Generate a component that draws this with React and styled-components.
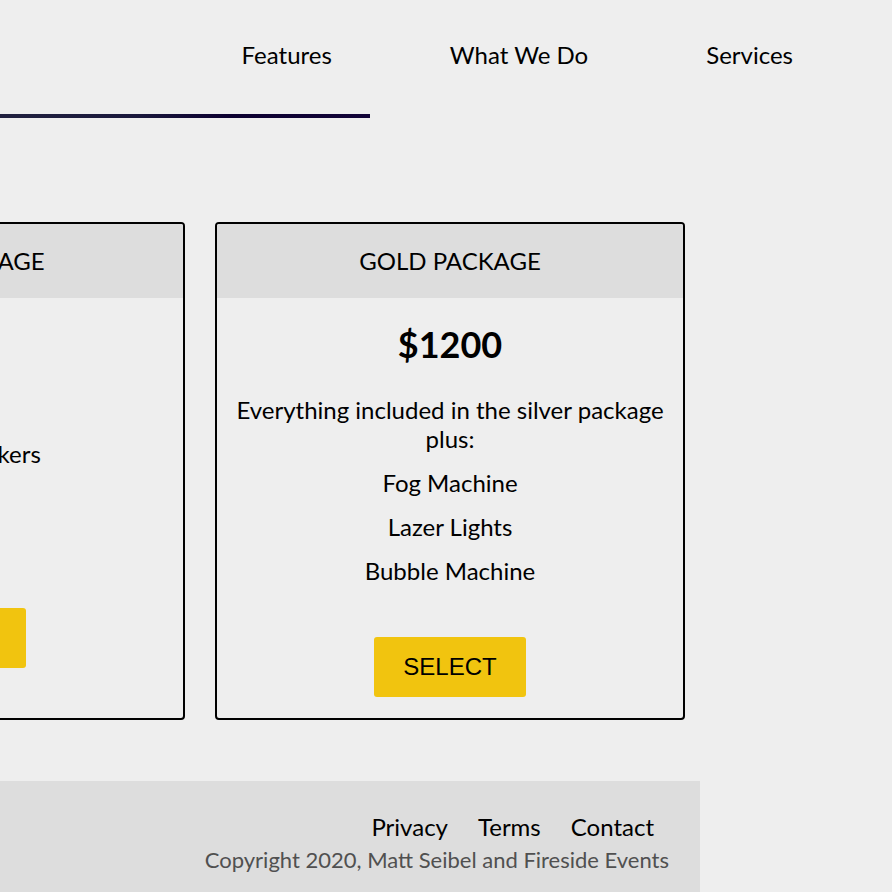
import React from "react";
import styled, { createGlobalStyle } from "styled-components";

const GlobalStyle = createGlobalStyle`
  html, body {
    margin: 0;
    padding: 0;
    background: #eeeeee;
    overflow: hidden;
  }
  body {
    font-family: Lato, "Noto Sans", sans-serif;
    color: #000;
  }
  * { box-sizing: border-box; }
`;

const Page = styled.div`
  width: 1692px;
  margin-left: -800px;
`;

const NavBar = styled.nav`
  display: flex;
  justify-content: flex-end;
  padding: 40px 40px 44px 0;
`;

const NavLink = styled.a`
  font-size: 24px;
  line-height: 30px;
  padding: 0 59px;
  color: #000;
  text-decoration: none;
`;

const Underline = styled.div`
  width: 1170px;
  height: 4px;
  background: linear-gradient(
    90deg,
    #20203f 0%,
    #20203f 70%,
    #1a183c 80%,
    #0c0030 88%,
    #120438 100%
  );
`;

const Content = styled.div`
  width: 1500px;
`;

const CardsRow = styled.section`
  display: flex;
  justify-content: flex-end;
  align-items: stretch;
  gap: 30px;
  padding-right: 15px;
  margin-top: 104px;
`;

const Card = styled.div`
  flex: none;
  width: 470px;
  border: 2px solid #000;
  border-radius: 4px;
  overflow: hidden;
  display: flex;
  flex-direction: column;
  align-items: center;
  padding-bottom: 21px;
`;

const CardHeader = styled.h2`
  align-self: stretch;
  margin: 0;
  background: #dddddd;
  font-size: 24px;
  font-weight: 400;
  line-height: 30px;
  padding: 22px 10px;
  text-align: center;
`;

const Price = styled.div`
  margin-top: 24px;
  font-size: 36px;
  font-weight: 700;
  line-height: 44px;
  text-align: center;
`;

const Features = styled.div`
  margin-top: 29px;
  padding: 0 12px;
  display: flex;
  flex-direction: column;
  gap: 15px;
  text-align: center;
`;

const Feature = styled.p`
  margin: 0;
  font-size: 24px;
  line-height: 29px;
`;

const SelectButton = styled.button`
  margin-top: 52px;
  width: 152px;
  height: 60px;
  border: none;
  border-radius: 3px;
  background: #f1c40f;
  color: #000;
  font-family: "Liberation Sans", Arial, sans-serif;
  font-size: 24px;
  cursor: pointer;
`;

const Footer = styled.footer`
  margin-top: 61px;
  background: #dddddd;
  display: flex;
  flex-direction: column;
  align-items: flex-end;
  padding: 31px 31px 30px 0;
`;

const FooterLinks = styled.div`
  display: flex;
`;

const FooterLink = styled.a`
  font-size: 24px;
  line-height: 29px;
  margin: 0 15px;
  color: #000;
  text-decoration: none;
`;

const Copyright = styled.p`
  margin: 6px 0 0;
  font-size: 22px;
  line-height: 26px;
  color: #505050;
`;

const packages = [
  {
    name: "BRONZE PACKAGE",
    price: "$400",
    items: ["DJ", "Lights"],
  },
  {
    name: "SILVER PACKAGE",
    price: "$800",
    items: ["DJ", "Premier Speakers", "Lights", "Mic"],
  },
  {
    name: "GOLD PACKAGE",
    price: "$1200",
    items: [
      "Everything included in the silver package plus:",
      "Fog Machine",
      "Lazer Lights",
      "Bubble Machine",
    ],
  },
];

export default function App() {
  return (
    <>
      <GlobalStyle />
      <Page>
        <header>
          <NavBar>
            <NavLink href="#">Features</NavLink>
            <NavLink href="#">What We Do</NavLink>
            <NavLink href="#">Services</NavLink>
          </NavBar>
          <Underline />
        </header>
        <Content>
          <CardsRow>
            {packages.map((p) => (
              <Card key={p.name}>
                <CardHeader>{p.name}</CardHeader>
                <Price>{p.price}</Price>
                <Features>
                  {p.items.map((it) => (
                    <Feature key={it}>{it}</Feature>
                  ))}
                </Features>
                <SelectButton>SELECT</SelectButton>
              </Card>
            ))}
          </CardsRow>
          <Footer>
            <FooterLinks>
              <FooterLink href="#">Privacy</FooterLink>
              <FooterLink href="#">Terms</FooterLink>
              <FooterLink href="#">Contact</FooterLink>
            </FooterLinks>
            <Copyright>Copyright 2020, Matt Seibel and Fireside Events</Copyright>
          </Footer>
        </Content>
      </Page>
    </>
  );
}
